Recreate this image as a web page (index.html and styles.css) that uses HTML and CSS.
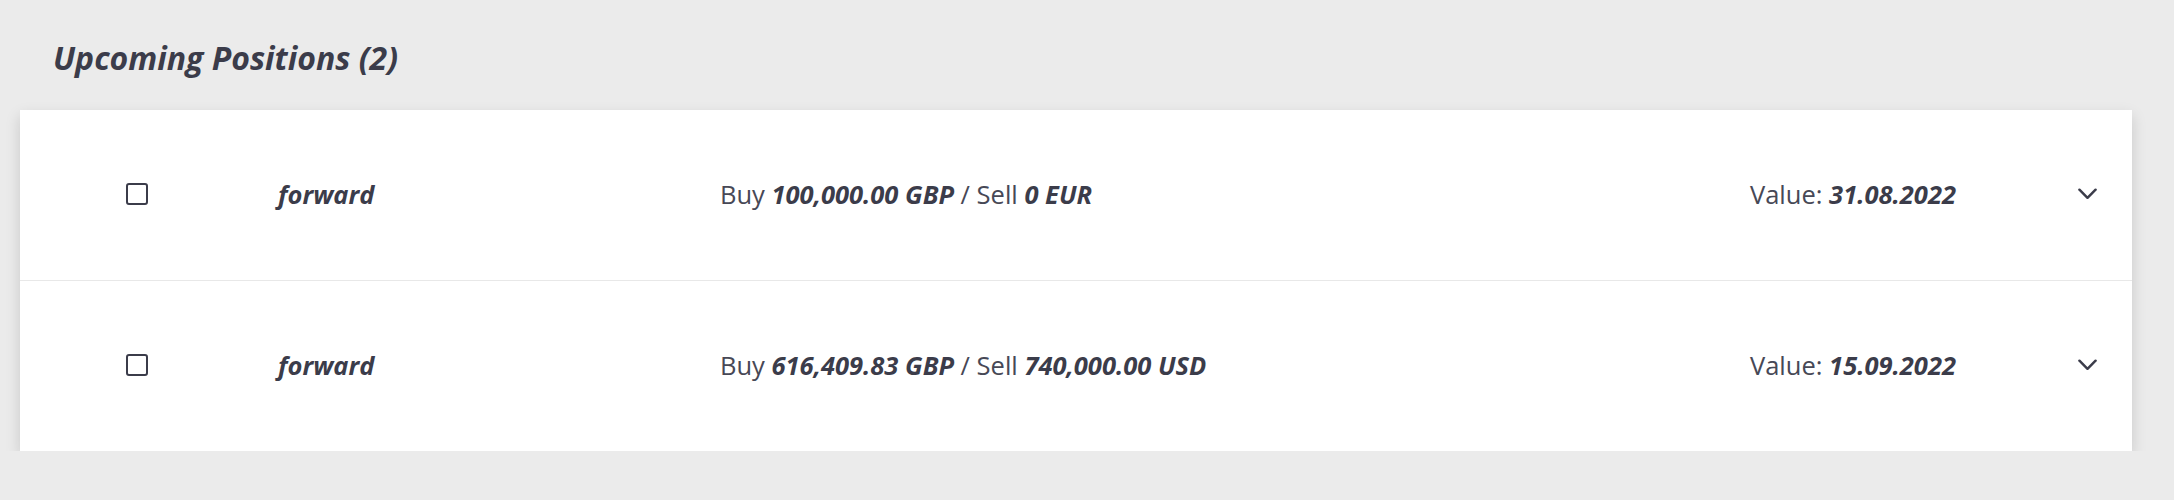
FILE: index.html
```html
<!DOCTYPE html>
<html lang="en">
<head>
<meta charset="utf-8">
<title>Upcoming Positions</title>
<link rel="stylesheet" href="styles.css">
</head>
<body>
<main class="page">
  <h2 class="title">Upcoming Positions (2)</h2>
  <section class="card">
    <div class="row">
      <div class="cell-check"><span class="checkbox"></span></div>
      <div class="cell-type">forward</div>
      <div class="cell-deal">Buy <b>100,000.00 GBP</b> / Sell <b>0 EUR</b></div>
      <div class="cell-value">Value: <b>31.08.2022</b></div>
      <div class="cell-toggle">
        <svg class="chevron" viewBox="0 0 20 12" width="19" height="12"><polyline points="1.5,1.5 10,10 18.5,1.5" fill="none" stroke="#3b3c4a" stroke-width="2.6" stroke-linecap="round" stroke-linejoin="round"/></svg>
      </div>
    </div>
    <div class="row">
      <div class="cell-check"><span class="checkbox"></span></div>
      <div class="cell-type">forward</div>
      <div class="cell-deal">Buy <b>616,409.83 GBP</b> / Sell <b>740,000.00 USD</b></div>
      <div class="cell-value">Value: <b>15.09.2022</b></div>
      <div class="cell-toggle">
        <svg class="chevron" viewBox="0 0 20 12" width="19" height="12"><polyline points="1.5,1.5 10,10 18.5,1.5" fill="none" stroke="#3b3c4a" stroke-width="2.6" stroke-linecap="round" stroke-linejoin="round"/></svg>
      </div>
    </div>
  </section>
</main>
</body>
</html>
```

FILE: styles.css
```css
html, body {
  margin: 0;
  padding: 0;
  background: #ebebeb;
}

body {
  font-family: "Open Sans", "Noto Sans", "Liberation Sans", sans-serif;
  color: #474856;
}

.page {
  padding: 40px 42px 0 20px;
}

.title {
  margin: 0 0 35px 33px;
  font-size: 32px;
  line-height: 35px;
  font-weight: 700;
  font-style: italic;
  color: #3b3c4a;
}

.card {
  background: #ffffff;
  box-shadow: 0 6px 14px rgba(0, 0, 0, 0.15);
}

.row {
  display: grid;
  grid-template-columns: 256px 444px 1030px 1fr auto;
  align-items: center;
  box-sizing: border-box;
  height: 170px;
  padding-right: 35px;
  padding-bottom: 2px;
  font-size: 25.5px;
}

.row + .row {
  border-top: 1px solid #e8e8e8;
  height: 171px;
}

.cell-check {
  padding-left: 106px;
  display: flex;
  align-items: center;
}

.checkbox {
  display: block;
  width: 22px;
  height: 22px;
  box-sizing: border-box;
  border: 2.5px solid #3b3c4a;
  border-radius: 3px;
}

.cell-type {
  padding-left: 2px;
  font-weight: 700;
  font-style: italic;
  color: #3b3c4a;
}

.cell-deal b,
.cell-value b {
  font-weight: 700;
  font-style: italic;
  color: #3b3c4a;
}

.cell-toggle {
  display: flex;
  align-items: center;
}

.chevron {
  display: block;
}
```
